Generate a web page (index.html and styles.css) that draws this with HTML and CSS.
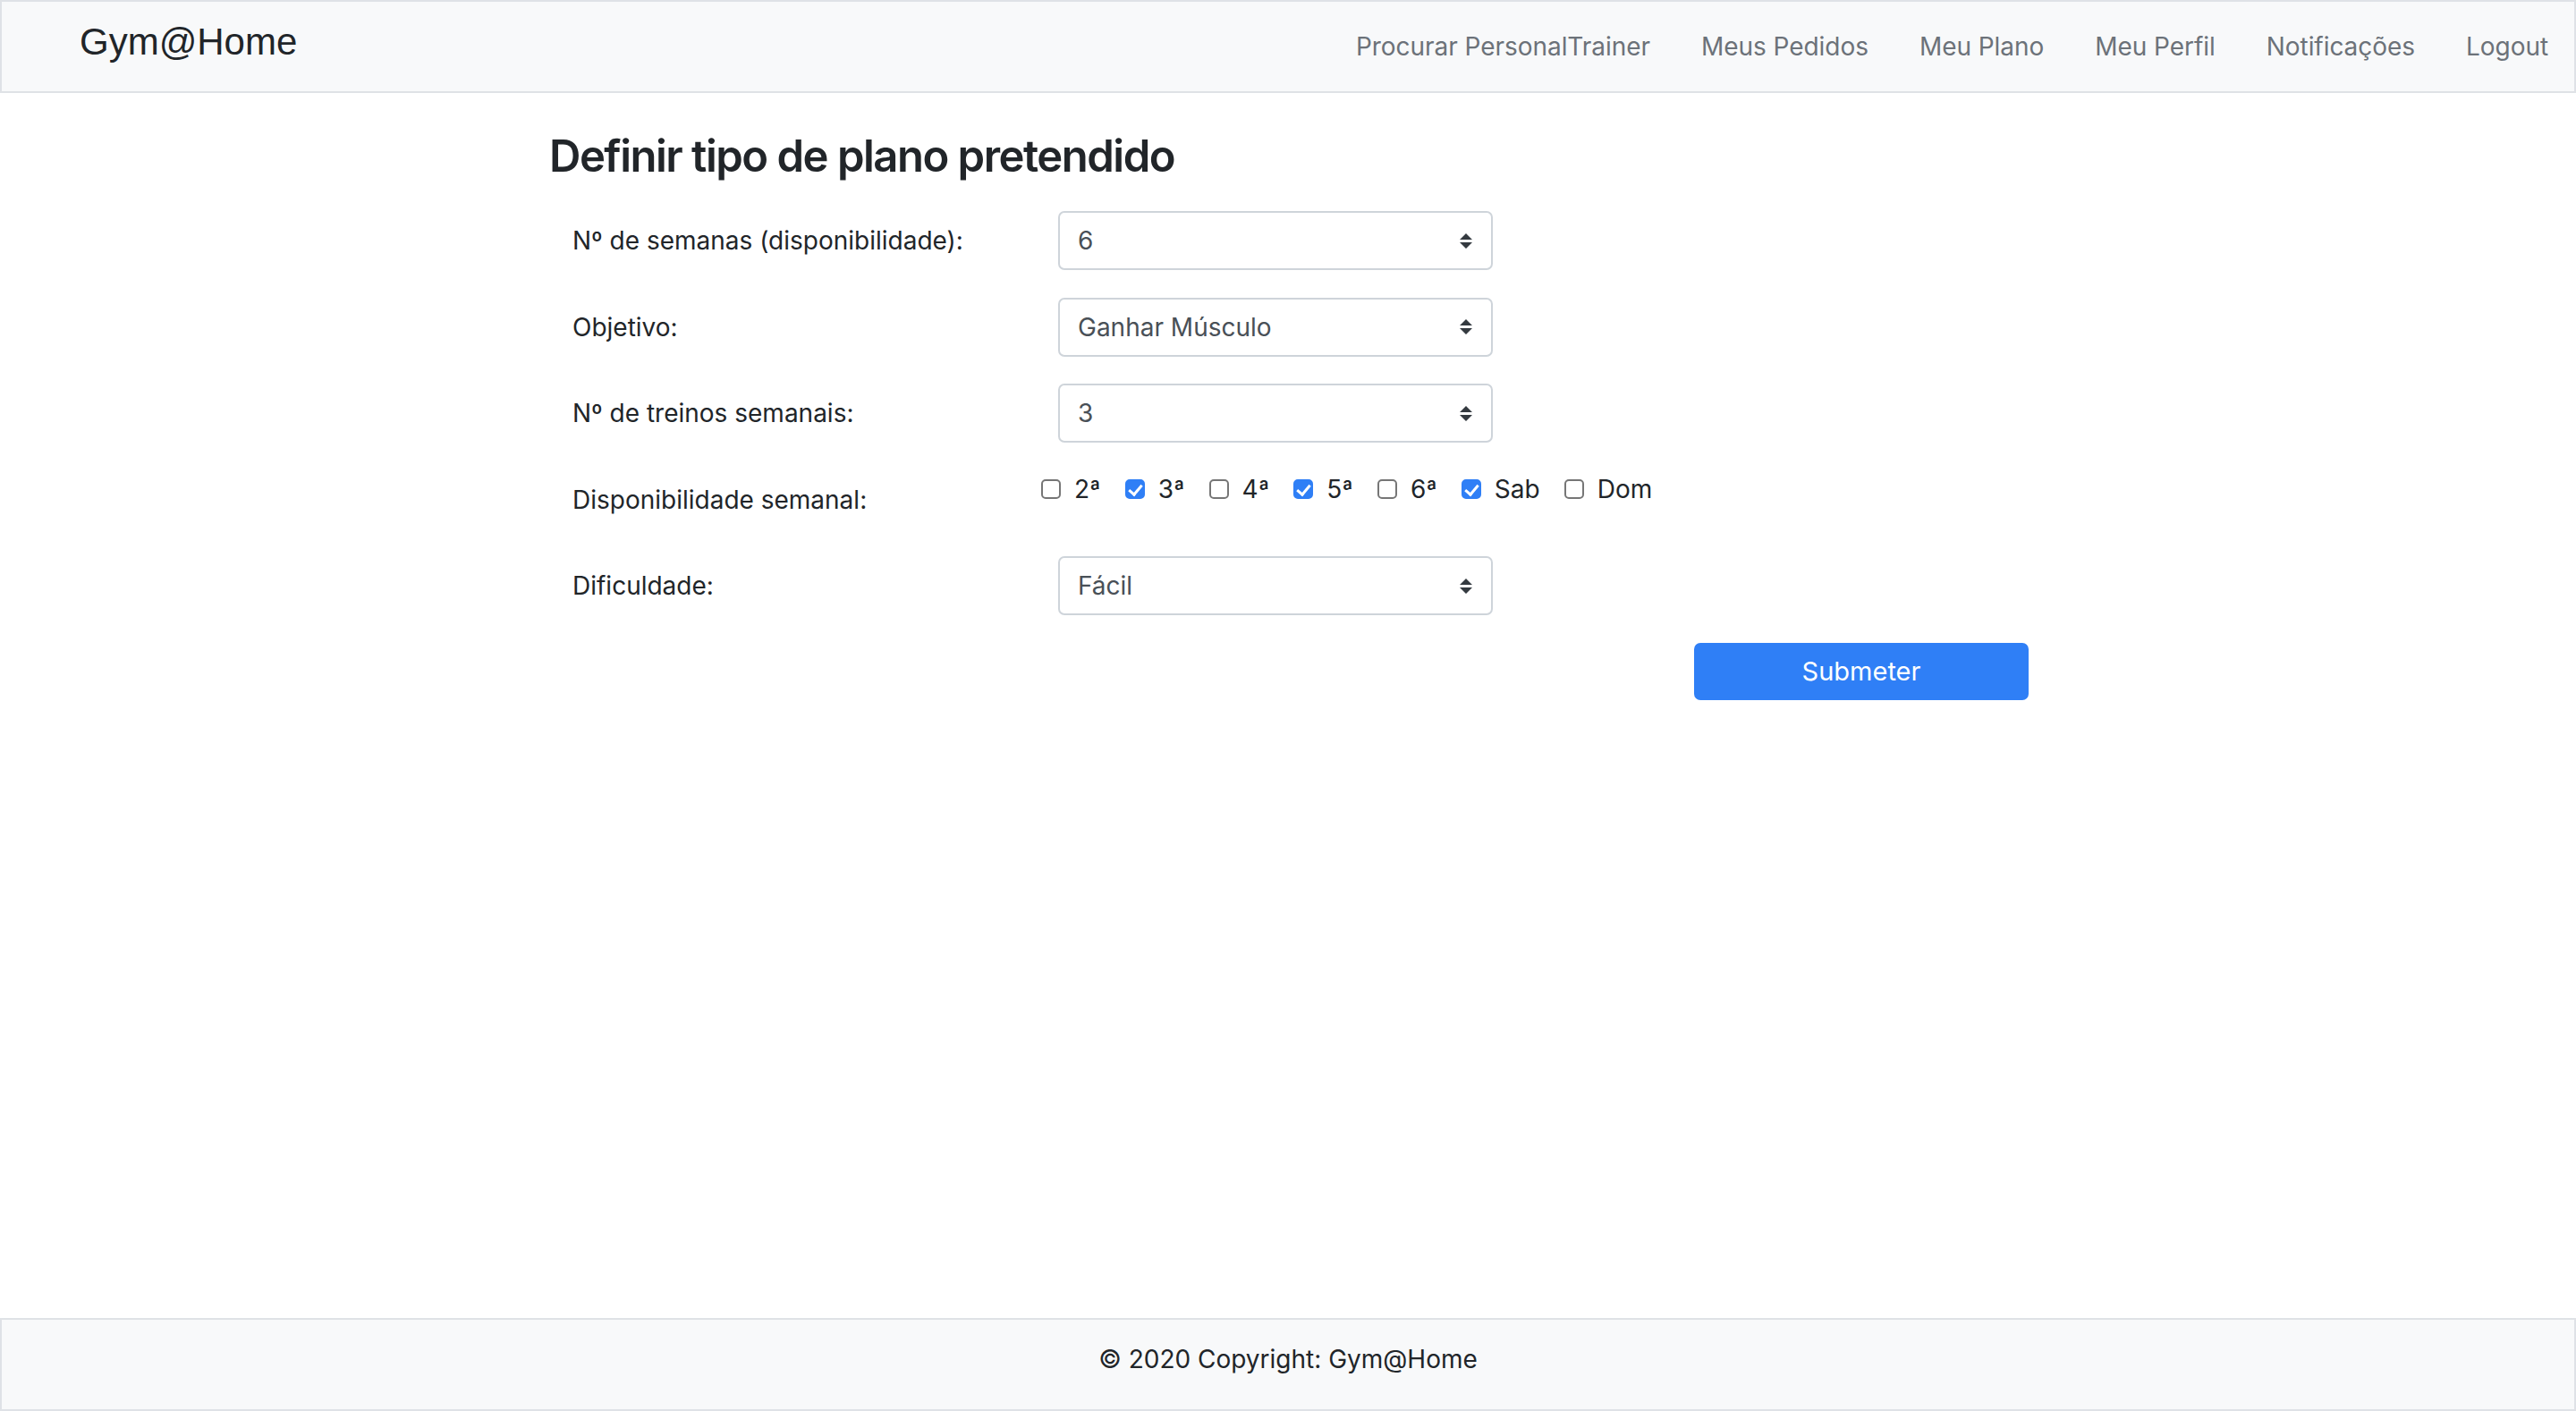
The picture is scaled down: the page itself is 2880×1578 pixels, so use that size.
FILE: index.html
```html
<!DOCTYPE html>
<html lang="pt">
<head>
<meta charset="utf-8">
<title>Gym@Home</title>
<link rel="stylesheet" href="styles.css">
</head>
<body>
<nav class="navbar">
  <a class="brand" href="#">Gym@Home</a>
  <ul class="nav-links">
    <li><a href="#">Procurar PersonalTrainer</a></li>
    <li><a href="#">Meus Pedidos</a></li>
    <li><a href="#">Meu Plano</a></li>
    <li><a href="#">Meu Perfil</a></li>
    <li><a href="#">Notificações</a></li>
    <li><a href="#">Logout</a></li>
  </ul>
</nav>

<main class="container">
  <h3 class="title">Definir tipo de plano pretendido</h3>
  <form class="plan-form">
    <div class="form-row">
      <label class="form-label">Nº de semanas (disponibilidade):</label>
      <div class="select"><span>6</span><svg width="14" height="17" viewBox="0 0 14 17"><path d="M0 7 L7 0 L14 7 Z M0 10 L14 10 L7 17 Z" fill="#343a40"/></svg></div>
    </div>
    <div class="form-row">
      <label class="form-label">Objetivo:</label>
      <div class="select"><span>Ganhar Músculo</span><svg width="14" height="17" viewBox="0 0 14 17"><path d="M0 7 L7 0 L14 7 Z M0 10 L14 10 L7 17 Z" fill="#343a40"/></svg></div>
    </div>
    <div class="form-row">
      <label class="form-label">Nº de treinos semanais:</label>
      <div class="select"><span>3</span><svg width="14" height="17" viewBox="0 0 14 17"><path d="M0 7 L7 0 L14 7 Z M0 10 L14 10 L7 17 Z" fill="#343a40"/></svg></div>
    </div>
    <div class="form-row">
      <label class="form-label">Disponibilidade semanal:</label>
      <div class="checks">
        <label class="check"><input type="checkbox"><span>2ª</span></label>
        <label class="check"><input type="checkbox" checked><span>3ª</span></label>
        <label class="check"><input type="checkbox"><span>4ª</span></label>
        <label class="check"><input type="checkbox" checked><span>5ª</span></label>
        <label class="check"><input type="checkbox"><span>6ª</span></label>
        <label class="check"><input type="checkbox" checked><span>Sab</span></label>
        <label class="check"><input type="checkbox"><span>Dom</span></label>
      </div>
    </div>
    <div class="form-row">
      <label class="form-label">Dificuldade:</label>
      <div class="select"><span>Fácil</span><svg width="14" height="17" viewBox="0 0 14 17"><path d="M0 7 L7 0 L14 7 Z M0 10 L14 10 L7 17 Z" fill="#343a40"/></svg></div>
    </div>
    <div class="actions">
      <button type="button" class="btn-primary">Submeter</button>
    </div>
  </form>
</main>

<footer class="footer">© 2020 Copyright: Gym@Home</footer>
</body>
</html>
```

FILE: styles.css
```css
* { box-sizing: border-box; }

html, body { height: 100%; }

body {
  margin: 0;
  min-height: 100vh;
  display: flex;
  flex-direction: column;
  font-family: Inter, "Noto Sans", sans-serif;
  font-size: 28px;
  line-height: 1.5;
  color: #212529;
  background: #ffffff;
}

.navbar {
  height: 104px;
  display: flex;
  align-items: center;
  background: #f8f9fa;
  border: 2px solid #dfe2e6;
  padding: 0 29px 0 87px;
}

.brand {
  font-family: "Liberation Sans", Arial, sans-serif;
  font-size: 42px;
  line-height: 48px;
  color: #212529;
  text-decoration: none;
  padding-bottom: 10px;
}

.nav-links {
  list-style: none;
  margin: 0 0 0 auto;
  padding: 0;
  display: flex;
  gap: 57px;
}

.nav-links a {
  color: #6c7279;
  text-decoration: none;
  font-size: 28px;
  line-height: 42px;
  letter-spacing: -0.05px;
  display: block;
}

.container {
  width: 1654px;
  margin-left: 614px;
  padding-top: 41px;
}

.title {
  margin: 0 0 31px 0;
  font-size: 49px;
  line-height: 60px;
  font-weight: 600;
  letter-spacing: -1.5px;
  color: #212529;
}

.plan-form {
  display: flex;
  flex-direction: column;
  gap: 30.5px;
}

.form-row {
  display: grid;
  grid-template-columns: 543px 486px;
  height: 66px;
  padding-left: 26px;
}

.form-label {
  align-self: center;
  font-size: 28px;
  line-height: 42px;
}

.select {
  height: 66px;
  border: 2px solid #ced4da;
  border-radius: 7px;
  background: #fff;
  display: flex;
  align-items: center;
  justify-content: space-between;
  padding: 0 21px 0 20px;
  color: #495057;
  font-size: 28px;
}

.checks {
  display: flex;
  align-items: center;
  align-self: start;
  margin-left: -19px;
  margin-top: 4px;
  gap: 27px;
  height: 34px;
}

.check {
  display: flex;
  align-items: center;
  gap: 15px;
  font-size: 28px;
  line-height: 34px;
}

.check input {
  appearance: none;
  -webkit-appearance: none;
  margin: 0;
  width: 22px;
  height: 22px;
  border: 2px solid #767676;
  border-radius: 5px;
  background: #fff;
  position: relative;
}

.check input:checked {
  background: #2f7ff6;
  border-color: #2f7ff6;
}

.check input:checked::after {
  content: "";
  position: absolute;
  left: 5px;
  top: 1px;
  width: 6px;
  height: 12px;
  border: solid #fff;
  border-width: 0 3px 3px 0;
  transform: rotate(40deg);
}

.actions {
  display: flex;
  justify-content: flex-end;
}

.btn-primary {
  width: 374px;
  height: 64px;
  border: none;
  border-radius: 7px;
  background: #2f7ff6;
  color: #fff;
  font-family: Inter, "Noto Sans", sans-serif;
  font-size: 29px;
  cursor: pointer;
}

.footer {
  margin-top: auto;
  height: 104px;
  background: #f8f9fa;
  border: 2px solid #dfe2e6;
  display: flex;
  align-items: center;
  justify-content: center;
  padding-bottom: 12px;
  font-size: 28px;
  line-height: 42px;
  color: #212529;
}
```
